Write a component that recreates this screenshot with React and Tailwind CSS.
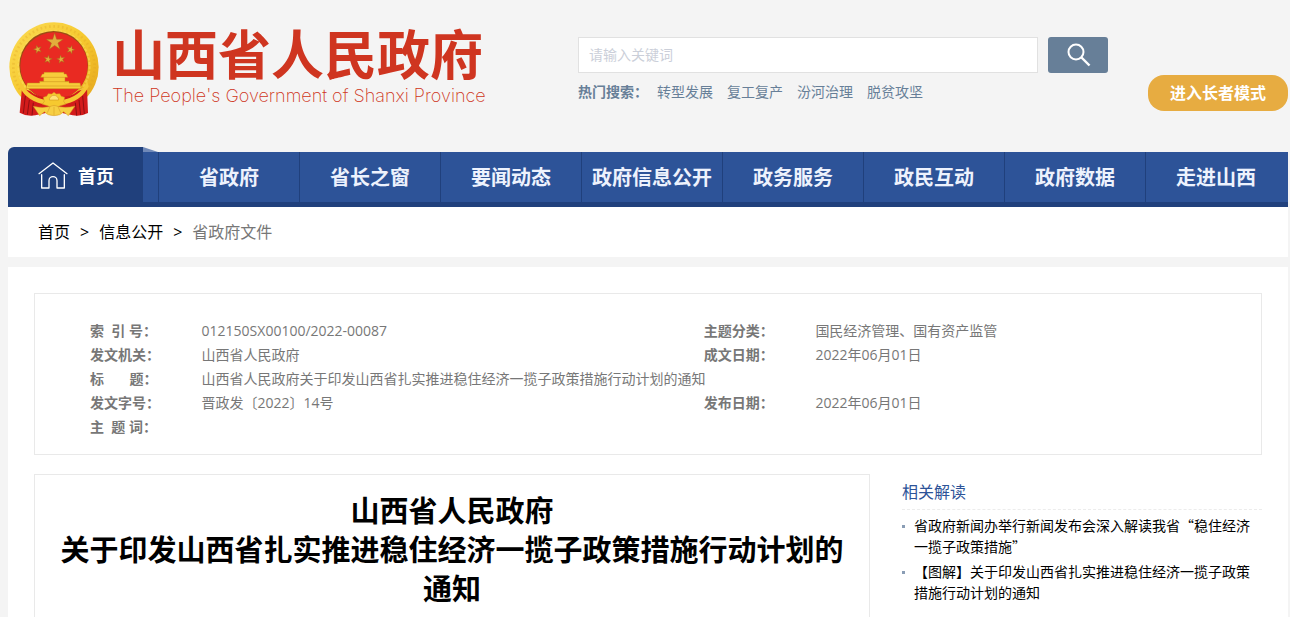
import React, { useState } from "react";

const hotWords = ["转型发展", "复工复产", "汾河治理", "脱贫攻坚"];

const navItems = [
  "省政府",
  "省长之窗",
  "要闻动态",
  "政府信息公开",
  "政务服务",
  "政民互动",
  "政府数据",
  "走进山西",
];

const infoRows = [
  {
    label: "索\u00a0\u00a0引 号：",
    value: "012150SX00100/2022-00087",
    label2: "主题分类：",
    value2: "国民经济管理、国有资产监管",
  },
  {
    label: "发文机关：",
    value: "山西省人民政府",
    label2: "成文日期：",
    value2: "2022年06月01日",
  },
  {
    label: "标\u00a0\u00a0\u00a0\u00a0\u00a0\u00a0\u00a0题：",
    value: "山西省人民政府关于印发山西省扎实推进稳住经济一揽子政策措施行动计划的通知",
  },
  {
    label: "发文字号：",
    value: "晋政发〔2022〕14号",
    label2: "发布日期：",
    value2: "2022年06月01日",
  },
  { label: "主\u00a0\u00a0题 词：", value: "" },
];

const related = [
  "省政府新闻办举行新闻发布会深入解读我省“稳住经济一揽子政策措施”",
  "【图解】关于印发山西省扎实推进稳住经济一揽子政策措施行动计划的通知",
];

function Star({ x, y, r, turn = 0 }) {
  const points = Array.from({ length: 10 }, (_, i) => {
    const a = ((i * 36 - 90 + turn) * Math.PI) / 180;
    const d = i % 2 ? r * 0.38 : r;
    return `${(x + d * Math.cos(a)).toFixed(1)},${(y + d * Math.sin(a)).toFixed(1)}`;
  }).join(" ");
  return <polygon points={points} fill="#e2ae3c" stroke="#a8651a" strokeWidth="1.5" />;
}

function Emblem() {
  return (
    <svg className="h-25 w-23 shrink-0" viewBox="0 0 276 300" aria-hidden="true">
      <defs>
        <linearGradient id="gold" x1="0" y1="0" x2="1" y2="1">
          <stop offset="0" stopColor="#fbdc55" />
          <stop offset="0.5" stopColor="#f6c92f" />
          <stop offset="1" stopColor="#e3a11c" />
        </linearGradient>
      </defs>
      <circle cx="138" cy="141" r="134" fill="url(#gold)" />
      <circle cx="138" cy="141" r="122" fill="none" stroke="#dfa425" strokeWidth="8" strokeDasharray="5 8" opacity="0.35" />
      <circle cx="138" cy="139" r="107" fill="none" stroke="#fbdf63" strokeWidth="6" strokeDasharray="9 5" opacity="0.5" />
      <circle cx="137" cy="136" r="103" fill="#9c4d14" />
      <circle cx="138" cy="138" r="101" fill="#e92a22" />
      <Star x={140} y={66} r={27} />
      <Star x={89} y={88} r={13} turn={-18} />
      <Star x={188} y={89} r={13} turn={18} />
      <Star x={120} y={118} r={13} turn={10} />
      <Star x={159} y={118} r={13} turn={-10} />
      {/* gate tower */}
      <path
        d="M108 157h60v5h7l4 10h-8v12h12v5h33l4 17H54l4-17h37v-5h12v-12h-9l5-10h5z"
        fill="#f7cd3b"
        stroke="#c98a1b"
        strokeWidth="1.5"
      />
      <path d="M105 172h66M98 185h82M60 198h156" stroke="#c98a1b" strokeWidth="1.5" />
      {/* drapes */}
      <path
        d="M42 205l24 8q20 20 72 20t72-20l27-8l3 74q-20 11-46 7l-56-12l-56 12q-27 4-47-8z"
        fill="#d31b1b"
      />
      <path
        d="M52 228l-6 52M64 240l-6 44M76 248l-4 38M224 228l5 54M213 240l5 45M202 248l4 39"
        stroke="#8f0f12"
        strokeWidth="3"
      />
      <path
        d="M38 184q24 50 78 56l-2 13q-56-7-80-53zM238 184q-24 50-78 56l2 13q56-7 80-53z"
        fill="#f6c733"
      />
      {/* cog and knot */}
      <path
        d="M106 232l10-3 5-8 10 1 7-5 7 5 10-1 5 8 10 3-3 12 6 9-16 4-19 8-19-8-16-4 6-9z"
        fill="#f6c92f"
        stroke="#d2951f"
        strokeWidth="1.5"
      />
      <path d="M124 240a14 14 0 0 1 28 0z" fill="#ffe277" stroke="#c98a1b" strokeWidth="1.5" />
      <path
        d="M76 259q32 8 62-3q31 11 63 2l-20 29-14-12q-9 12-29 12t-29-12l-14 12z"
        fill="#f7cf44"
        stroke="#d2951f"
        strokeWidth="1.5"
      />
      <path
        d="M138 260v25M126 260l-8 18M150 260l8 18"
        stroke="#d2951f"
        strokeWidth="1.5"
      />
    </svg>
  );
}

function HomeIcon() {
  return (
    <svg
      className="h-[27px] w-[30px] shrink-0"
      viewBox="0 0 90 81"
      fill="none"
      stroke="#fff"
      strokeWidth="4"
      strokeLinecap="round"
      strokeLinejoin="round"
      aria-hidden="true"
    >
      <path d="M3 35L45 3l42 32" />
      <path d="M11 38v40h22V56a12 12 0 0 1 24 0v22h22V38" />
    </svg>
  );
}

function SearchIcon() {
  return (
    <svg className="ml-0.5 size-6" viewBox="0 0 24 24" fill="none" stroke="#fff" strokeWidth="2" aria-hidden="true">
      <circle cx="9" cy="9" r="7.5" />
      <path d="M14.5 14.5l8 8" strokeWidth="2.4" />
    </svg>
  );
}

function Header() {
  const [keyword, setKeyword] = useState("");

  return (
    <header className="flex h-[147px] items-start">
      <a href="#" className="flex w-[570px] shrink-0 items-start pt-5">
        <Emblem />
        <span className="ml-3 block whitespace-nowrap pt-2 text-[#cf3520]">
          <span className="block font-['Liberation_Serif','Noto_Sans_CJK_SC',serif] text-[53px] leading-[58px] font-bold">
            山西省人民政府
          </span>
          <span className="block font-[Inter] text-[18px] leading-5 font-extralight">
            The People's Government of Shanxi Province
          </span>
        </span>
      </a>
      <div className="min-w-0 flex-1 pt-[37px]">
        <form className="flex gap-2.5" onSubmit={(e) => e.preventDefault()}>
          <input
            type="text"
            aria-label="关键词"
            placeholder="请输入关键词"
            value={keyword}
            onChange={(e) => setKeyword(e.target.value)}
            className="h-9 min-w-0 flex-1 border border-[#e1e1e1] bg-white px-2.5 pb-0.5 text-sm outline-none placeholder:text-[#cbcfd9]"
          />
          <button
            type="submit"
            aria-label="搜索"
            className="flex h-9 w-15 items-center justify-center rounded-[3px] bg-[#677f98]"
          >
            <SearchIcon />
          </button>
        </form>
        <div className="mt-2 flex gap-3.5 text-sm leading-[22px] whitespace-nowrap text-[#677f98]">
          <b className="w-[65px]">热门搜索：</b>
          {hotWords.map((word) => (
            <a key={word} href="#">
              {word}
            </a>
          ))}
        </div>
      </div>
      <button
        type="button"
        className="mt-[75px] ml-10 h-9 w-35 shrink-0 rounded-2xl bg-[#e7ac41] text-base font-bold text-white"
      >
        进入长者模式
      </button>
    </header>
  );
}

function Nav() {
  return (
    <nav className="flex h-15 items-end">
      <a
        href="#"
        className="flex h-15 w-[135px] shrink-0 items-center gap-2.5 rounded-tl-md bg-[#20407c] pb-1 pl-[30px] text-lg font-bold text-white"
      >
        <HomeIcon />
        <span className="pt-0.5">首页</span>
      </a>
      <div className="flex min-w-0 flex-1 flex-col">
        <svg className="h-[5px] w-[15px]" viewBox="0 0 15 5" aria-hidden="true">
          <path d="M0 0l15 5H0z" fill="#7089b8" />
        </svg>
        <ul className="flex h-[55px] border-b-5 border-[#20407c] bg-[#2d5398] pr-0.5 pl-[15px]">
          {navItems.map((item) => (
            <li key={item} className="min-w-0 flex-1 border-l border-[#20407c]">
              <a
                href="#"
                className="flex h-full items-center justify-center pt-0.5 text-xl font-bold whitespace-nowrap text-[#edf2fd]"
              >
                {item}
              </a>
            </li>
          ))}
        </ul>
      </div>
    </nav>
  );
}

function InfoTable() {
  return (
    <div className="border border-[#e9e9e9] px-[55px] pt-[25px] pb-[15px]">
      <table className="w-full table-fixed text-left text-sm leading-6 text-[#777]">
        <colgroup>
          <col className="w-[10%]" />
          <col className="w-[45%]" />
          <col className="w-[10%]" />
          <col className="w-[35%]" />
        </colgroup>
        <tbody>
          {infoRows.map((row) => (
            <tr key={row.label} className="h-6">
              <th className="p-0 font-bold whitespace-nowrap">{row.label}</th>
              <td className="p-0" colSpan={row.label2 ? 1 : 3}>
                {row.value}
              </td>
              {row.label2 && (
                <>
                  <th className="p-0 font-bold whitespace-nowrap">{row.label2}</th>
                  <td className="p-0">{row.value2}</td>
                </>
              )}
            </tr>
          ))}
        </tbody>
      </table>
    </div>
  );
}

export default function App() {
  return (
    <div
      lang="zh-CN"
      className="flex min-h-screen flex-col bg-[#f4f4f4] pr-0.5 pl-2 font-['Open_Sans','Noto_Sans_CJK_SC',sans-serif]"
    >
      <Header />
      <Nav />

      {/* 当前位置 */}
      <div className="flex h-[50px] items-center gap-2.5 bg-white px-[30px] text-base text-black">
        <a href="#">首页</a>
        <span>&gt;</span>
        <a href="#">信息公开</a>
        <span>&gt;</span>
        <span className="text-[#777]">省政府文件</span>
      </div>

      <main className="mt-2.5 flex flex-1 flex-col bg-white px-[26px] pt-[26px]">
        <InfoTable />
        <div className="mt-[19px] flex flex-1 gap-8">
          <article className="min-w-0 flex-1 border border-b-0 border-[#e9e9e9] px-5 pt-4 pb-2">
            <h1 className="text-center text-[29px] leading-[39px] font-bold text-black">
              山西省人民政府
              <br />
              关于印发山西省扎实推进稳住经济一揽子政策措施行动计划的通知
            </h1>
          </article>
          <aside className="w-[360px] shrink-0">
            <h2 className="border-b border-dashed border-[#ececec] pt-1.5 pb-[5px] text-base text-[#2d5398]">
              相关解读
            </h2>
            <ul className="mt-[5px] flex flex-col gap-1 font-['Noto_Sans_CJK_SC',sans-serif] text-sm leading-[21px] text-black">
              {related.map((title) => (
                <li key={title} className="flex gap-[9px]">
                  <span className="mt-[10px] size-[3px] shrink-0 bg-[#8a9db5]" />
                  <a href="#" className="min-w-0 flex-1">
                    {title}
                  </a>
                </li>
              ))}
            </ul>
          </aside>
        </div>
      </main>
    </div>
  );
}
